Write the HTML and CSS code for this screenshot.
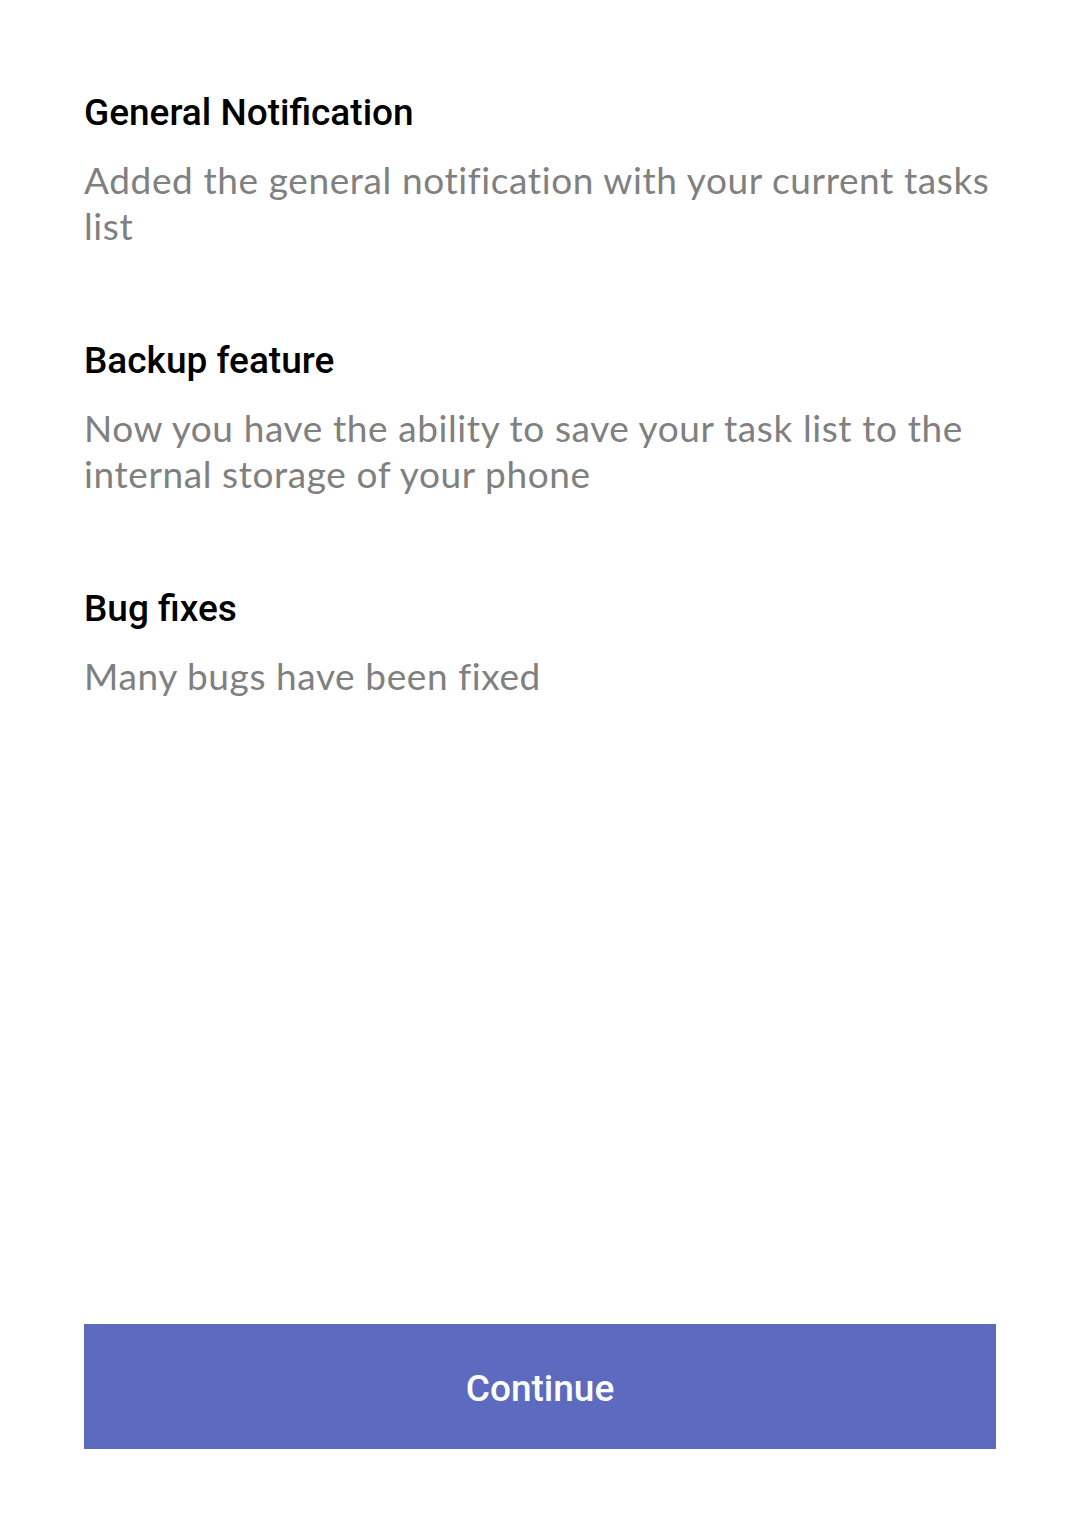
FILE: index.html
```html
<!DOCTYPE html>
<html>
<head>
<meta charset="utf-8">
<link rel="stylesheet" href="styles.css">
</head>
<body>
<div class="screen">
  <div class="list">
    <section class="item">
      <h2 class="title">General Notification</h2>
      <p class="desc">Added the general notification with your current tasks list</p>
    </section>
    <section class="item">
      <h2 class="title">Backup feature</h2>
      <p class="desc">Now you have the ability to save your task list to the internal storage of your phone</p>
    </section>
    <section class="item">
      <h2 class="title">Bug fixes</h2>
      <p class="desc">Many bugs have been fixed</p>
    </section>
  </div>
  <button class="continue">Continue</button>
</div>
</body>
</html>
```

FILE: styles.css
```css
html, body {
  margin: 0;
  padding: 0;
  background: #ffffff;
}
.screen {
  width: 1080px;
  height: 1534px;
  box-sizing: border-box;
  padding: 91px 84px 85px 84px;
  display: flex;
  flex-direction: column;
}
.list {
  flex: 1;
  display: flex;
  flex-direction: column;
  gap: 90px;
}
.item {
  display: flex;
  flex-direction: column;
  gap: 22px;
}
.title {
  margin: 0;
  font-family: Roboto, "Liberation Sans", sans-serif;
  font-weight: 500;
  font-size: 37px;
  line-height: 44px;
  color: #000000;
}
.desc {
  margin: 0;
  font-family: Lato, "Open Sans", sans-serif;
  font-weight: 400;
  font-size: 37px;
  line-height: 46px;
  color: #808080;
  letter-spacing: 0.6px;
}
.continue {
  height: 125px;
  border: none;
  background: #5c6bc0;
  color: #ffffff;
  font-family: Roboto, "Liberation Sans", sans-serif;
  font-weight: 500;
  font-size: 37px;
  padding: 3px 0 0 0;
}
```
